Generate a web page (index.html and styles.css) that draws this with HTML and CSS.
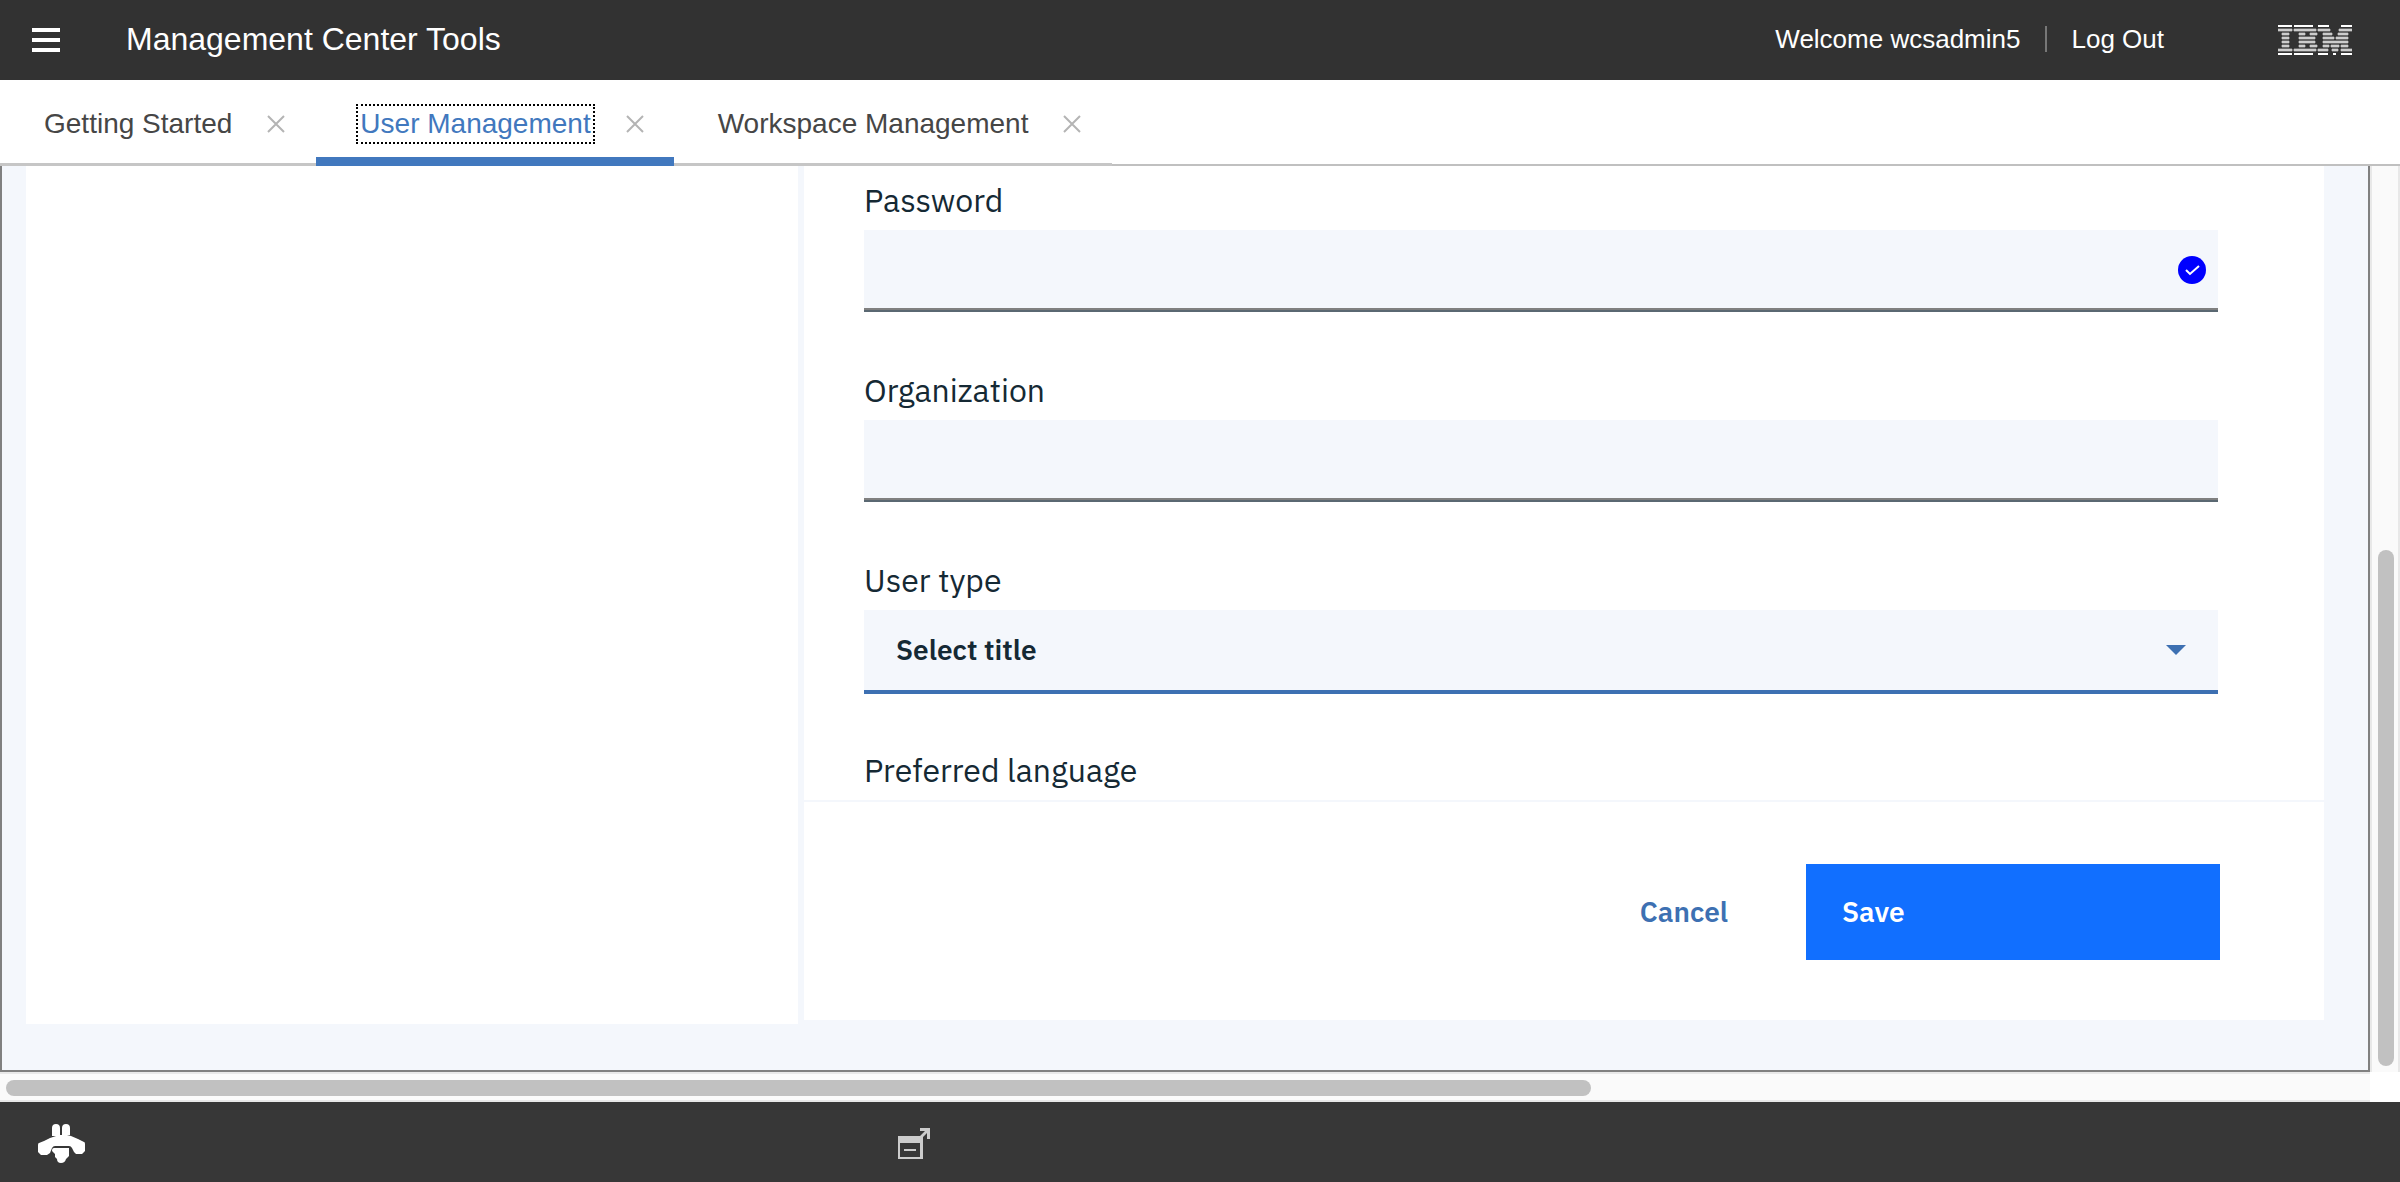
FILE: index.html
```html
<!DOCTYPE html>
<html lang="en">
<head>
<meta charset="utf-8">
<title>Management Center Tools</title>
<link rel="stylesheet" href="styles.css">
</head>
<body>
<div class="app">
  <header class="topbar">
    <button class="icon-btn menu" type="button" aria-label="Menu">
      <svg width="28" height="26" viewBox="0 0 28 26" fill="#fff"><path d="M0 1h28v4H0zM0 11h28v4H0zM0 21h28v4H0z"/></svg>
    </button>
    <h1 class="title">Management Center Tools</h1>
    <span class="welcome">Welcome wcsadmin5</span>
    <a class="logout" href="#">Log Out</a>
    <svg class="ibm" width="74" height="32" viewBox="0 -1 74 32" fill="#ccc" stroke="#ccc" stroke-width=".7" role="img" aria-label="IBM">
      <path fill="#fff" stroke="none" d="M0 0h14v2H0zM16 0h19v2H16zM40 0h11v2H40zM63 0h11v2H63zM0 28h14v2H0zM16 28h19v2H16zM40 28h10v2H40zM55 28h3v2h-3zM63 28h11v2H63z"/>
      <path d="M0 4h14v2H0zM16 4h22v2H16zM40 4h12v2H40zM61 4h13v2H61zM4 8h7v2H4zM21 8h6v2h-6zM32 8h7v2h-7zM45 8h9v2h-9zM60 8h10v2H60zM4 12h7v2H4zM21 12h16v2H21zM45 12h11v2H45zM58 12h12v2H58zM4 16h7v2H4zM21 16h16v2H21zM45 16h25v2H45zM4 20h7v2H4zM21 20h6v2h-6zM32 20h7v2h-7zM45 20h6v2h-6zM53 20h8v2h-8zM63 20h7v2h-7zM0 24h14v2H0zM16 24h22v2H16zM40 24h10v2H40zM54 24h6v2h-6zM63 24h11v2H63z"/>
    </svg>
  </header>

  <nav class="tabs" aria-label="Open tools">
    <div class="tab">
      <a class="tab-link" href="#">Getting Started</a>
      <button class="icon-btn" type="button" aria-label="Close Getting Started"><svg class="x" viewBox="0 0 18 18"><path d="M1 1l16 16M17 1L1 17"/></svg></button>
    </div>
    <div class="tab active">
      <a class="tab-link" href="#" aria-current="page">User Management</a>
      <button class="icon-btn" type="button" aria-label="Close User Management"><svg class="x" viewBox="0 0 18 18"><path d="M1 1l16 16M17 1L1 17"/></svg></button>
    </div>
    <div class="tab">
      <a class="tab-link" href="#">Workspace Management</a>
      <button class="icon-btn" type="button" aria-label="Close Workspace Management"><svg class="x" viewBox="0 0 18 18"><path d="M1 1l16 16M17 1L1 17"/></svg></button>
    </div>
  </nav>

  <div class="viewport">
    <main class="workspace">
      <section class="side-panel"></section>
      <form class="main-panel">
        <div class="fields">
          <div class="field">
            <label for="password">Password</label>
            <div class="control">
              <input id="password" type="password">
              <svg class="valid" viewBox="0 0 28 28"><circle cx="14" cy="14" r="14" fill="#00f"/><path d="M8 14l4 4 9-8" fill="none" stroke="#fff" stroke-width="2"/></svg>
            </div>
          </div>
          <div class="field">
            <label for="organization">Organization</label>
            <div class="control"><input id="organization" type="text"></div>
          </div>
          <div class="field">
            <label for="user-type">User type</label>
            <div class="control">
              <select id="user-type"><option>Select title</option></select>
              <svg class="arrow" viewBox="0 0 20 10"><path d="M0 0h20L10 10z" fill="#3d70b2"/></svg>
            </div>
          </div>
          <div class="field">
            <span class="label">Preferred language</span>
          </div>
        </div>
        <div class="actions">
          <button class="btn cancel" type="button">Cancel</button>
          <button class="btn save" type="submit">Save</button>
        </div>
      </form>
    </main>
    <div class="track vertical"><div class="thumb"></div></div>
    <div class="track horizontal"><div class="thumb"></div></div>
  </div>

  <footer class="bottombar">
    <svg class="bee" width="47" height="40" viewBox="0 0 47 40" fill="#fff">
      <path d="M14 4q0-4 4-4t4 4v7h2V4q0-4 4-4t4 4v7h-3l4 1 7 3 6 3q1 0 1 2v7l-3 3h-6l-2-2-2-4q-1-2-3-2H17q-2 0-3 2l-2 5-3 2H3l-3-3v-7q0-2 1-2l5-2 6-3 6-2h-4z"/>
      <path d="M16 24h15v8l-3 3q-1 4-5 4t-4-4l-2-2v-3l-3-3q0-3 2-3z"/>
    </svg>
    <svg class="popout" width="32" height="31" viewBox="0 0 32 31" fill="#ccc">
      <path fill-rule="evenodd" d="M0 8h25v23H0zM2 15v14h20V15z"/>
      <path d="M6 21h12v2H6z"/>
      <path d="M22 0h10v11h-3V5l-6 6-2-2 6-6h-5z"/>
    </svg>
  </footer>
</div>
</body>
</html>
```
FILE: styles.css
```css
* { box-sizing: border-box; }
body { margin: 0; font-family: "Liberation Sans", Arial, sans-serif; background: #fff; }
svg { display: block; }

.app { display: flex; flex-direction: column; min-height: 100vh; }
.icon-btn { padding: 0; border: 0; background: none; }

.topbar { display: flex; align-items: center; height: 80px; padding: 0 48px 2px 32px; background: #323232; color: #fff; font-size: 26px; }
.menu, .ibm { margin-top: 2px; }
.title { flex: 1; margin: 0 0 0 66px; font-size: 32px; font-weight: 400; }
.welcome { padding-right: 25px; }
.logout { padding-left: 24px; border-left: 2px solid #777; color: #fff; line-height: 26px; text-decoration: none; }
.ibm { margin-left: 114px; }

.tabs { display: flex; height: 86px; border-bottom: 2px solid #c0c0c0; }
.tab { display: flex; align-items: center; gap: 31px; height: 86px; padding: 4px 31px 0 40px; border-bottom: 3px solid #c6c6c6; }
.tab.active { padding: 10px 30px 0 40px; border-bottom: 9px solid #4178be; }
.tab-link { padding: 2px; border: 2px dotted transparent; font-size: 28px; line-height: 32px; color: #464646; text-decoration: none; }
.active .tab-link { border-color: #000; color: #4178be; }
.x { width: 18px; height: 18px; fill: none; stroke: #b4b4b4; stroke-width: 2; }

.viewport { flex: 1; display: grid; grid-template: 1fr 30px / 1fr 30px; }
.workspace { display: flex; padding: 0 44px 46px 24px; border: 2px solid #808080; border-top: 0; background: #f4f7fc; }
.side-panel { flex: 772 0 0; background: #fff; }
.main-panel { flex: 1520 0 0; display: flex; flex-direction: column; margin: 0 0 4px 6px; background: #fff; font-family: "IBM Plex Sans", Roboto, sans-serif; color: #152934; }

.fields { flex: 1 1 634px; display: grid; grid-auto-rows: 190px; max-height: 634px; padding: 14px 106px 0 60px; overflow: hidden; }
.field { display: flex; flex-direction: column; gap: 10px; }
.field label, .label { font-size: 32px; line-height: 40px; }
.control { position: relative; }
input, select { display: block; width: 100%; height: 82px; padding: 0 32px 2px; border: 0; border-radius: 0; background: #f4f7fc; color: #152934; font: 600 28px "IBM Plex Sans", Roboto, sans-serif; appearance: none; }
input { border-bottom: 2px solid #5a6872; box-shadow: inset 0 -2px #808080; }
select { height: 84px; border-bottom: 4px solid #3d70b2; }
.valid { position: absolute; right: 12px; top: 26px; width: 28px; height: 28px; }
.arrow { position: absolute; right: 32px; top: 35px; width: 20px; height: 10px; }

.actions { display: flex; justify-content: flex-end; padding: 62px 104px 60px 60px; border-top: 2px solid #f4f7fc; }
.btn { height: 96px; border: 0; font: 600 28px "IBM Plex Sans", Roboto, sans-serif; text-align: left; }
.cancel { padding: 0 78px 2px 36px; background: none; color: #3d70b2; }
.save { width: 414px; padding: 0 36px 2px; background: #116fff; color: #fff; }

.track { display: flex; background: #fafafa; }
.vertical { flex-direction: column; justify-content: flex-end; padding: 6px; border: solid #e8e8e8; border-width: 0 2px; }
.horizontal { padding: 6px; border: solid #e8e8e8; border-width: 2px 0; }
.thumb { border-radius: 8px; background: #c1c1c1; }
.vertical .thumb { width: 16px; height: 57.7%; }
.horizontal .thumb { width: 67.2%; height: 16px; }

.bottombar { display: flex; align-items: center; height: 80px; padding: 4px 38px 0; background: #373737; }
.popout { margin: 0 0 2px 813px; }
```
